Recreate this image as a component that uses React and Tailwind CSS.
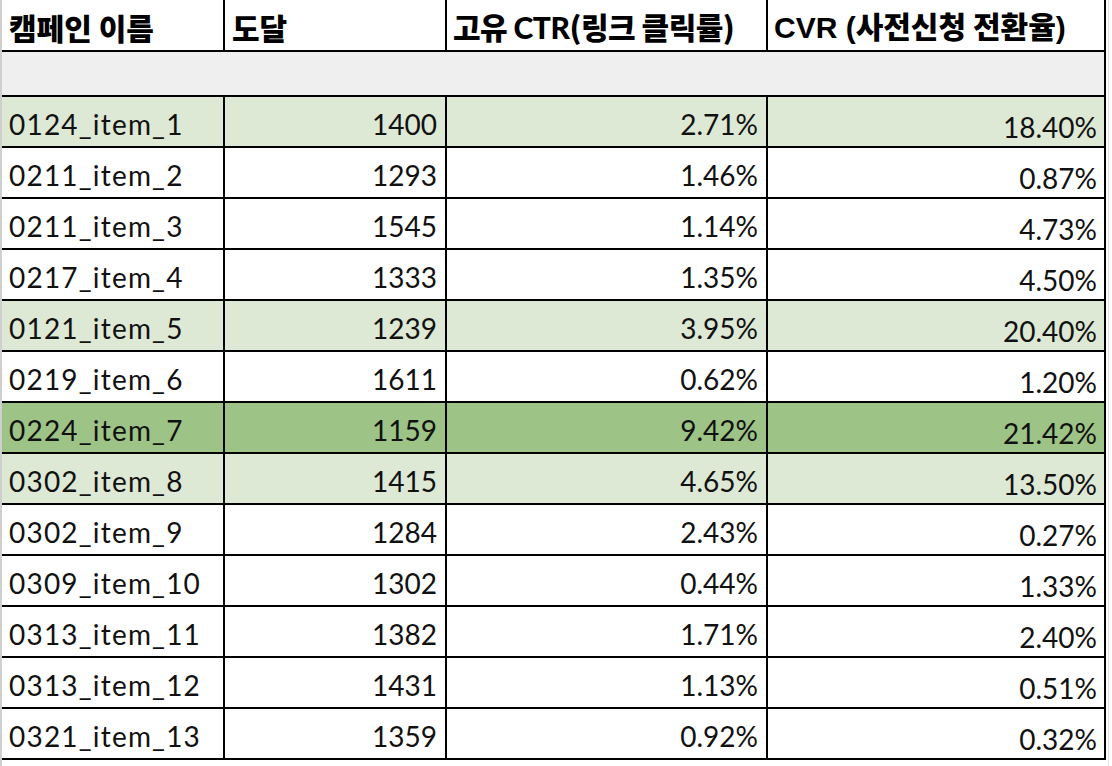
import React from "react";

const rows = [
  ["0124_item_1", "1400", "2.71%", "18.40%", "light"],
  ["0211_item_2", "1293", "1.46%", "0.87%", ""],
  ["0211_item_3", "1545", "1.14%", "4.73%", ""],
  ["0217_item_4", "1333", "1.35%", "4.50%", ""],
  ["0121_item_5", "1239", "3.95%", "20.40%", "light"],
  ["0219_item_6", "1611", "0.62%", "1.20%", ""],
  ["0224_item_7", "1159", "9.42%", "21.42%", "dark"],
  ["0302_item_8", "1415", "4.65%", "13.50%", "light"],
  ["0302_item_9", "1284", "2.43%", "0.27%", ""],
  ["0309_item_10", "1302", "0.44%", "1.33%", ""],
  ["0313_item_11", "1382", "1.71%", "2.40%", ""],
  ["0313_item_12", "1431", "1.13%", "0.51%", ""],
  ["0321_item_13", "1359", "0.92%", "0.32%", ""],
];

const bgFor = (t) =>
  t === "light" ? "bg-[#dde8d5]" : t === "dark" ? "bg-[#9dc386]" : "bg-white";

export default function App() {
  const body = "font-['Lato','Open_Sans',sans-serif] text-[28px] text-[#111] leading-none";
  const head =
    "font-['Noto_Sans_CJK_KR',sans-serif] font-black text-[30px] text-black leading-none";
  return (
    <div className="w-[1112px] h-[766px] bg-white overflow-hidden flex">
      <div className="w-[2px] bg-[#cfcfcf] shrink-0" />
      <div className="flex flex-col">
        <div className="grid grid-cols-[221px_220px_319px_336px] gap-[2px] bg-black border-r-2 border-b-2 border-black">
          <div className={`bg-white h-[50px] flex items-center pl-[7px] pt-[3px] ${head}`}>
            캠페인 이름
          </div>
          <div className={`bg-white h-[50px] flex items-center pl-[7px] pt-[3px] ${head}`}>
            도달
          </div>
          <div className={`bg-white h-[50px] flex items-center pl-[6px] pt-[3px] tracking-[-0.5px] ${head}`}>
            <span>
              고유 <span className="font-['Lato',sans-serif] font-black">CTR</span>(링크 클릭률)
            </span>
          </div>
          <div className={`bg-white h-[50px] flex items-center pl-[6px] pt-[3px] ${head}`}>
            <span>
              <span className="font-['Liberation_Sans',sans-serif] font-bold">CVR (</span>사전신청 전환율
              <span className="font-['Liberation_Sans',sans-serif] font-bold">)</span>
            </span>
          </div>
          <div className="col-span-4 h-[43px] bg-[#efefef]" />
          {rows.map((r) => (
            <React.Fragment key={r[0]}>
              <div className={`${bgFor(r[4])} h-[49px] flex items-center pl-[7px] pt-[5px] tracking-[1.2px] ${body}`}>
                {r[0]}
              </div>
              <div className={`${bgFor(r[4])} h-[49px] flex items-center justify-end pr-[8px] pt-[5px] ${body}`}>
                {r[1]}
              </div>
              <div className={`${bgFor(r[4])} h-[49px] flex items-center justify-end pr-[8px] pt-[5px] ${body}`}>
                {r[2]}
              </div>
              <div className={`${bgFor(r[4])} h-[49px] flex items-center justify-end pr-[7px] pt-[11px] ${body}`}>
                {r[3]}
              </div>
            </React.Fragment>
          ))}
        </div>
      </div>
      <div className="w-[2px]" />
      <div className="w-[1px] bg-[#e4e4e4]" />
    </div>
  );
}
